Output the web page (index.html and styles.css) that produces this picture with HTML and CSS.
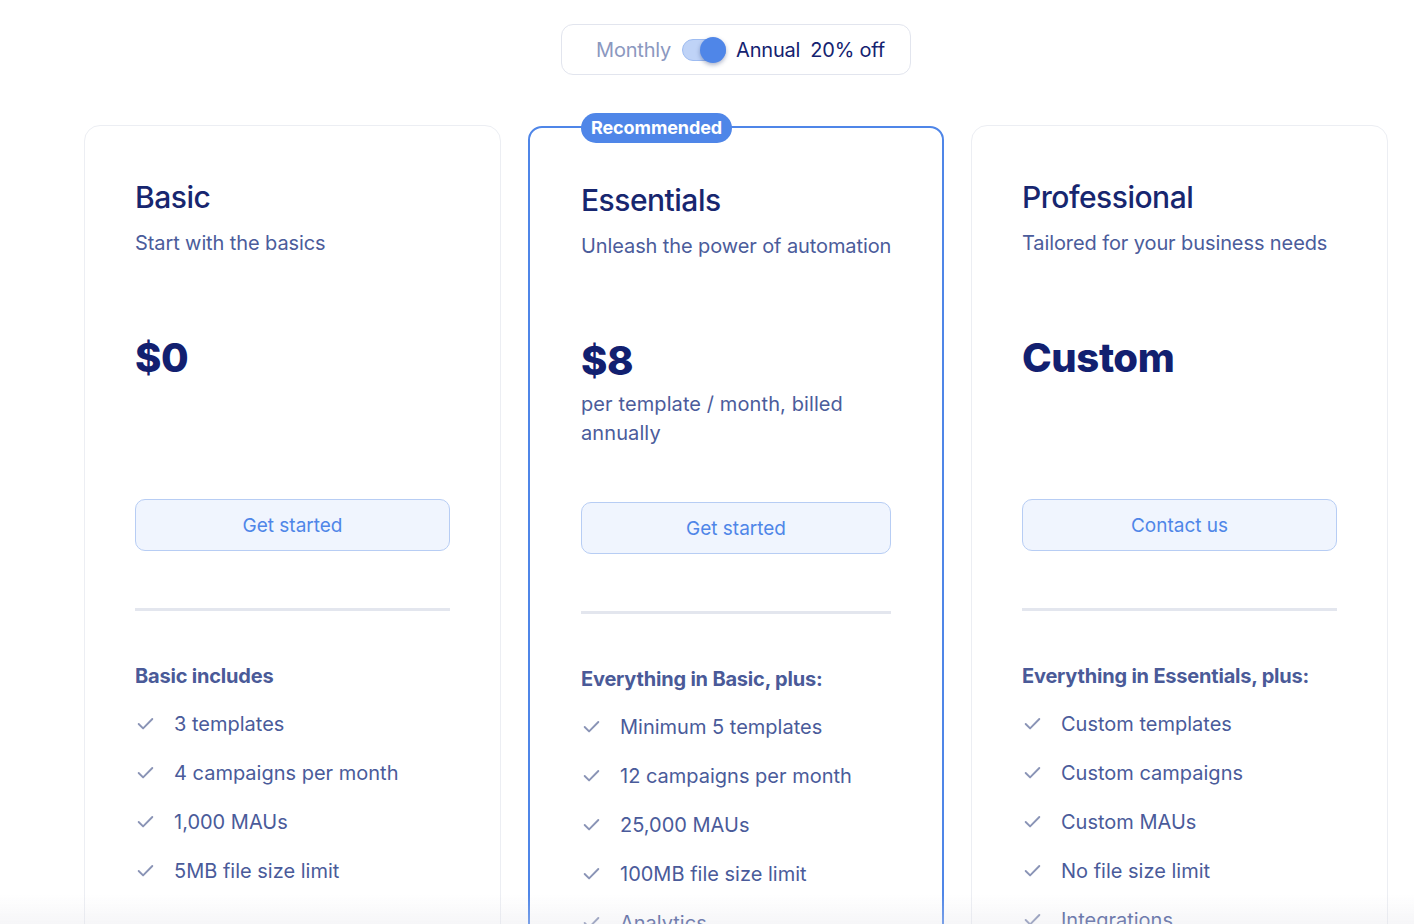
FILE: index.html
```html
<!DOCTYPE html>
<html lang="en">
<head>
<meta charset="utf-8">
<title>Pricing</title>
<link rel="stylesheet" href="styles.css">
</head>
<body>
<main class="pricing">
  <div class="billing">
    <div class="billing-box">
      <span class="billing-opt muted">Monthly</span>
      <span class="switch" role="switch" aria-checked="true"><span class="knob"></span></span>
      <span class="billing-opt">Annual</span>
      <span class="billing-opt">20% off</span>
    </div>
  </div>

  <div class="plans">
    <section class="plan">
      <h2 class="plan-name">Basic</h2>
      <p class="plan-tag">Start with the basics</p>
      <div class="plan-price">
        <div class="amount">$0</div>
      </div>
      <button class="cta">Get started</button>
      <hr class="rule">
      <h3 class="feat-title">Basic includes</h3>
      <ul class="feats">
        <li><svg class="tick" viewBox="0 0 20 20"><path d="M3.5 10.5l4.2 4.2 8.8-9"/></svg>3 templates</li>
        <li><svg class="tick" viewBox="0 0 20 20"><path d="M3.5 10.5l4.2 4.2 8.8-9"/></svg>4 campaigns per month</li>
        <li><svg class="tick" viewBox="0 0 20 20"><path d="M3.5 10.5l4.2 4.2 8.8-9"/></svg>1,000 MAUs</li>
        <li><svg class="tick" viewBox="0 0 20 20"><path d="M3.5 10.5l4.2 4.2 8.8-9"/></svg>5MB file size limit</li>
      </ul>
    </section>

    <section class="plan featured">
      <span class="badge">Recommended</span>
      <h2 class="plan-name">Essentials</h2>
      <p class="plan-tag">Unleash the power of automation</p>
      <div class="plan-price">
        <div class="amount">$8</div>
        <p class="per">per template / month, billed annually</p>
      </div>
      <button class="cta">Get started</button>
      <hr class="rule">
      <h3 class="feat-title">Everything in Basic, plus:</h3>
      <ul class="feats">
        <li><svg class="tick" viewBox="0 0 20 20"><path d="M3.5 10.5l4.2 4.2 8.8-9"/></svg>Minimum 5 templates</li>
        <li><svg class="tick" viewBox="0 0 20 20"><path d="M3.5 10.5l4.2 4.2 8.8-9"/></svg>12 campaigns per month</li>
        <li><svg class="tick" viewBox="0 0 20 20"><path d="M3.5 10.5l4.2 4.2 8.8-9"/></svg>25,000 MAUs</li>
        <li><svg class="tick" viewBox="0 0 20 20"><path d="M3.5 10.5l4.2 4.2 8.8-9"/></svg>100MB file size limit</li>
        <li><svg class="tick" viewBox="0 0 20 20"><path d="M3.5 10.5l4.2 4.2 8.8-9"/></svg>Analytics</li>
      </ul>
    </section>

    <section class="plan">
      <h2 class="plan-name">Professional</h2>
      <p class="plan-tag">Tailored for your business needs</p>
      <div class="plan-price">
        <div class="amount">Custom</div>
      </div>
      <button class="cta">Contact us</button>
      <hr class="rule">
      <h3 class="feat-title">Everything in Essentials, plus:</h3>
      <ul class="feats">
        <li><svg class="tick" viewBox="0 0 20 20"><path d="M3.5 10.5l4.2 4.2 8.8-9"/></svg>Custom templates</li>
        <li><svg class="tick" viewBox="0 0 20 20"><path d="M3.5 10.5l4.2 4.2 8.8-9"/></svg>Custom campaigns</li>
        <li><svg class="tick" viewBox="0 0 20 20"><path d="M3.5 10.5l4.2 4.2 8.8-9"/></svg>Custom MAUs</li>
        <li><svg class="tick" viewBox="0 0 20 20"><path d="M3.5 10.5l4.2 4.2 8.8-9"/></svg>No file size limit</li>
        <li><svg class="tick" viewBox="0 0 20 20"><path d="M3.5 10.5l4.2 4.2 8.8-9"/></svg>Integrations</li>
      </ul>
    </section>
  </div>
</main>
<div class="fade"></div>
</body>
</html>
```

FILE: styles.css
```css
* { box-sizing: border-box; }

html, body {
  margin: 0;
  height: 100%;
  overflow: hidden;
  background: #ffffff;
}

body {
  font-family: "Inter", "Liberation Sans", sans-serif;
  color: #1b2a78;
}

.pricing {
  width: 1304px;
  margin-left: 84px;
  padding-top: 24px;
}

/* billing period toggle */
.billing {
  display: flex;
  justify-content: center;
}

.billing-box {
  width: 350px;
  height: 51px;
  border: 1px solid #e2e5ee;
  border-radius: 12px;
  display: flex;
  align-items: center;
  justify-content: center;
  gap: 10px;
  padding-left: 9px;
}

.billing-opt {
  font-size: 20px;
  color: #142270;
  letter-spacing: -0.2px;
}

.billing-opt.muted { color: #8b98bf; margin-right: 1px; }

.switch {
  position: relative;
  width: 44px;
  height: 22px;
  border-radius: 11px;
  background: #bfd3f7;
  border: 1px solid #9ebcf1;
}

.switch .knob {
  position: absolute;
  right: -1px;
  top: -3px;
  width: 26px;
  height: 26px;
  border-radius: 50%;
  background: #4f86e8;
  box-shadow: 0 2px 4px rgba(20, 40, 100, 0.35);
}

/* plan cards */
.plans {
  display: flex;
  align-items: flex-start;
  gap: 27px;
  margin-top: 50px;
}

.plan {
  position: relative;
  width: 417px;
  height: 900px;
  border: 1px solid #eceef3;
  border-radius: 16px;
  padding: 50px 50px 0;
}

.plan.featured {
  width: 416px;
  margin-top: 1px;
  border: 2px solid #4f86e8;
  border-radius: 14px;
  padding: 51px 51px 0 51px;
}

.badge {
  position: absolute;
  top: -15px;
  left: 51px;
  height: 30px;
  padding: 0 10px;
  border-radius: 15px;
  background: #4f86e8;
  color: #ffffff;
  font-size: 18px;
  font-weight: 700;
  line-height: 30px;
  letter-spacing: -0.1px;
}

.plan-name {
  margin: 0;
  font-size: 30px;
  font-weight: 500;
  line-height: 42px;
  color: #17266f;
  letter-spacing: -0.5px;
}

.plan-tag {
  margin: 11px 0 0;
  font-size: 20px;
  line-height: 28px;
  color: #4b5c9b;
  letter-spacing: -0.1px;
  white-space: nowrap;
}

.plan-price {
  height: 242px;
  padding-top: 76px;
}

.amount {
  font-size: 40px;
  font-weight: 800;
  line-height: 50px;
  color: #122070;
  letter-spacing: -0.4px;
}

.per {
  margin: 4px 0 0;
  font-size: 20px;
  line-height: 29px;
  color: #4b5c9b;
  letter-spacing: 0.1px;
}

.cta {
  display: block;
  width: 100%;
  height: 52px;
  border: 1px solid #b7cdf4;
  border-radius: 10px;
  background: #f0f5fe;
  color: #4f86e8;
  font-family: inherit;
  font-size: 19px;
  letter-spacing: 0;
  cursor: pointer;
}

.rule {
  margin: 57px 0 0;
  border: 0;
  height: 3px;
  background: #e3e6ee;
}

.feat-title {
  margin: 52px 0 0;
  font-size: 20px;
  font-weight: 700;
  line-height: 26px;
  color: #4a5a98;
  letter-spacing: -0.2px;
}

.feats {
  list-style: none;
  margin: 10px 0 0;
  padding: 0;
}

.feats li {
  display: flex;
  align-items: center;
  gap: 18px;
  height: 49px;
  font-size: 20px;
  color: #4a5b9a;
  letter-spacing: 0;
}

.tick {
  width: 21px;
  height: 21px;
  flex: none;
}

.tick path {
  fill: none;
  stroke: #8a94b6;
  stroke-width: 1.8;
  stroke-linecap: round;
  stroke-linejoin: round;
}

/* soft grey haze along the bottom edge of the viewport */
.fade {
  position: fixed;
  left: 0;
  right: 0;
  bottom: 0;
  height: 30px;
  background: linear-gradient(to bottom, rgba(225, 225, 232, 0), rgba(225, 225, 232, 0.3));
  pointer-events: none;
}
```
